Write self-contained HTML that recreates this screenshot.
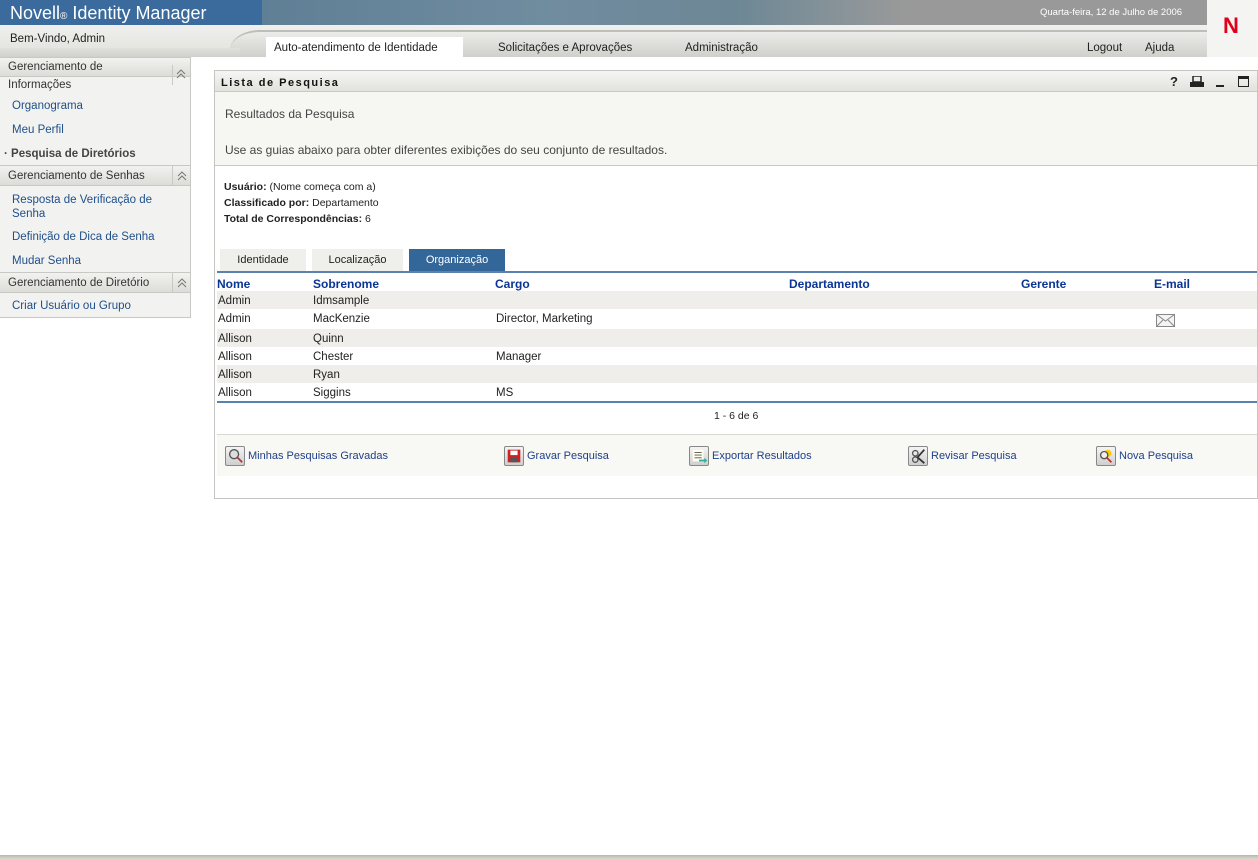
<!DOCTYPE html>
<html><head><meta charset="utf-8">
<style>
*{margin:0;padding:0;box-sizing:border-box}
body{width:1258px;height:859px;position:relative;background:#fff;font-family:"Liberation Sans",sans-serif;font-size:11px;color:#222;overflow:hidden}
.a{position:absolute;white-space:nowrap}
.t{margin-top:2px}
.lnk{color:#1f4f8a}
.sh{position:absolute;left:0;width:190px;background:linear-gradient(#f2f2f0,#dcdcd8);border-top:1px solid #c8c8c4;border-bottom:1px solid #c8c8c4;color:#333;font-size:11.5px;padding-left:8px}
.chev{position:absolute;right:0;top:0;width:18px;height:100%;border-left:1px solid #c8c8c4}
.row{position:absolute;left:217px;width:1040px;height:18px}
.row span{position:absolute;top:4px;font-size:11.5px}
.hd{position:absolute;top:277px;color:#0a3595;font-weight:bold;font-size:12px}
.act{position:absolute;top:446px;display:flex;align-items:center;gap:3px;color:#1f3f8a;font-size:11px}
.ic{width:20px;height:20px;border:1px solid #888;border-radius:2px;background:linear-gradient(#f4f4f4,#cfcfcf)}
</style></head><body>
<div class="a" style="left:0;top:0;width:262px;height:25px;background:#3b6a9c"></div>
<div class="a" style="left:262px;top:0;width:945px;height:25px;background:linear-gradient(90deg,#5f7f96 0%,#708c9f 30%,#6d8796 50%,#8a9499 62%,#999 68%,#999 100%)"></div>
<div class="a" style="left:10px;top:3px;color:#fff;font-size:18px">Novell<span style="font-size:10px">®</span> Identity Manager</div>
<div class="a" style="left:1040px;top:7px;color:#fff;font-size:9.5px">Quarta-feira, 12 de Julho de 2006</div>
<div class="a" style="left:1207px;top:0;width:51px;height:57px;background:#f4f4f2"></div>
<div class="a" style="left:1223px;top:13px;color:#e0001b;font-weight:bold;font-size:22px">N</div>
<div class="a" style="left:0;top:25px;width:1207px;height:32px;background:linear-gradient(#f0f0ee,#e0e0dc)"></div>
<div class="a" style="left:230px;top:30px;width:977px;height:27px;background:linear-gradient(#ececea,#cfcfcb);border-top-left-radius:30px 20px;border-top:2px solid #bdbdb9"></div>
<div class="a" style="left:0;top:48px;width:240px;height:9px;background:linear-gradient(#e0e0dc,#cfcfcb)"></div>
<div class="a t" style="left:10px;top:31px;font-size:11.5px;color:#222">Bem-Vindo, Admin</div>
<div class="a" style="left:266px;top:37px;width:197px;height:20px;background:#fff"></div>
<div class="a t" style="left:274px;top:40px;font-size:11.5px">Auto-atendimento de Identidade</div>
<div class="a t" style="left:498px;top:40px;font-size:11.5px">Solicitações e Aprovações</div>
<div class="a t" style="left:685px;top:40px;font-size:11.5px">Administração</div>
<div class="a t" style="left:1087px;top:40px;font-size:11.5px">Logout</div>
<div class="a t" style="left:1145px;top:40px;font-size:11.5px">Ajuda</div>
<div class="a" style="left:0;top:57px;width:191px;height:261px;background:#f2f2f0;border-right:1px solid #c8c8c4;border-bottom:1px solid #c8c8c4"></div>
<div class="sh" style="top:57px;height:20px;padding-top:3px">Gerenciamento de</div>
<div class="a" style="left:172px;top:65px;width:1px;height:20px;background:#c8c8c4"></div>
<svg class="a" style="left:176px;top:69px" width="10" height="10"><path d="M1 5L5 1L9 5M1 9L5 5L9 9" fill="none" stroke="#777"/></svg>
<div class="a t" style="left:8px;top:77px;font-size:11.5px;color:#333">Informações</div>
<div class="a lnk t" style="left:12px;top:98px;font-size:11.5px">Organograma</div>
<div class="a lnk t" style="left:12px;top:122px;font-size:11.5px">Meu Perfil</div>
<div class="a t" style="left:4px;top:146px;font-size:11.5px;font-weight:bold;color:#444">· Pesquisa de Diretórios</div>
<div class="sh" style="top:165px;height:21px;padding-top:4px">Gerenciamento de Senhas<div class="chev"><svg style="position:absolute;left:4px;top:5px" width="10" height="10"><path d="M1 5L5 1L9 5M1 9L5 5L9 9" fill="none" stroke="#777"/></svg></div></div>
<div class="a lnk t" style="left:12px;top:191px;font-size:11.5px;line-height:14px">Resposta de Verificação de<br>Senha</div>
<div class="a lnk t" style="left:12px;top:229px;font-size:11.5px">Definição de Dica de Senha</div>
<div class="a lnk t" style="left:12px;top:253px;font-size:11.5px">Mudar Senha</div>
<div class="sh" style="top:272px;height:21px;padding-top:4px">Gerenciamento de Diretório<div class="chev"><svg style="position:absolute;left:4px;top:5px" width="10" height="10"><path d="M1 5L5 1L9 5M1 9L5 5L9 9" fill="none" stroke="#777"/></svg></div></div>
<div class="a lnk t" style="left:12px;top:298px;font-size:11.5px">Criar Usuário ou Grupo</div>
<div class="a" style="left:214px;top:70px;width:1044px;height:429px;border:1px solid #c4c4c0;background:#fff"></div>
<div class="a" style="left:215px;top:71px;width:1042px;height:21px;background:linear-gradient(#f6f6f4,#e2e2de);border-bottom:1px solid #c8c8c4"></div>
<div class="a t" style="left:221px;top:75px;font-weight:bold;font-size:11px;letter-spacing:1.5px;color:#111">Lista de Pesquisa</div>
<div class="a" style="left:1170px;top:74px;font-weight:bold;font-size:13px;color:#222">?</div>
<svg class="a" style="left:1190px;top:76px" width="14" height="12"><rect x="3" y="0" width="8" height="6" fill="none" stroke="#222" stroke-width="1.5"/><rect x="0" y="6" width="14" height="5" fill="#222"/></svg>
<div class="a" style="left:1216px;top:85px;width:8px;height:2px;background:#222"></div>
<div class="a" style="left:1238px;top:76px;width:11px;height:11px;border:1.5px solid #222;border-top-width:3px"></div>
<div class="a" style="left:215px;top:92px;width:1042px;height:74px;background:#f6f7f3;border-bottom:1px solid #c8c8c4"></div>
<div class="a t" style="left:225px;top:105px;font-size:12px;color:#444">Resultados da Pesquisa</div>
<div class="a t" style="left:225px;top:141px;font-size:12px;color:#444">Use as guias abaixo para obter diferentes exibições do seu conjunto de resultados.</div>
<div class="a" style="left:224px;top:181px;font-size:10.5px"><b>Usuário:</b> (Nome começa com a)</div>
<div class="a" style="left:224px;top:197px;font-size:10.5px"><b>Classificado por:</b> Departamento</div>
<div class="a" style="left:224px;top:213px;font-size:10.5px"><b>Total de Correspondências:</b> 6</div>
<div class="a" style="left:220px;top:249px;width:86px;height:22px;background:#efefec;font-size:11px;text-align:center;padding-top:5px">Identidade</div>
<div class="a" style="left:312px;top:249px;width:91px;height:22px;background:#efefec;font-size:11px;text-align:center;padding-top:5px">Localização</div>
<div class="a" style="left:409px;top:249px;width:96px;height:22px;background:#336699;color:#fff;font-size:11px;text-align:center;padding-top:5px">Organização</div>
<div class="a" style="left:217px;top:271px;width:1040px;height:2px;background:#5b82ae"></div>
<div class="hd" style="left:217px">Nome</div>
<div class="hd" style="left:313px">Sobrenome</div>
<div class="hd" style="left:495px">Cargo</div>
<div class="hd" style="left:789px">Departamento</div>
<div class="hd" style="left:1021px">Gerente</div>
<div class="hd" style="left:1154px">E-mail</div>
<div class="row" style="top:291px;background:#efeeea"><span style="left:1px">Admin</span><span style="left:96px">Idmsample</span></div>
<div class="row" style="top:309px;height:20px"><span style="left:1px">Admin</span><span style="left:96px">MacKenzie</span><span style="left:279px">Director, Marketing</span></div>
<svg class="a" style="left:1156px;top:314px" width="19" height="13"><rect x="0.5" y="0.5" width="18" height="12" fill="#f4f4f4" stroke="#888"/><path d="M0.5 0.5L9.5 7L18.5 0.5M0.5 12.5L7 6M18.5 12.5L12 6" fill="none" stroke="#888"/></svg>
<div class="row" style="top:329px;background:#efeeea"><span style="left:1px">Allison</span><span style="left:96px">Quinn</span></div>
<div class="row" style="top:347px"><span style="left:1px">Allison</span><span style="left:96px">Chester</span><span style="left:279px">Manager</span></div>
<div class="row" style="top:365px;background:#efeeea"><span style="left:1px">Allison</span><span style="left:96px">Ryan</span></div>
<div class="row" style="top:383px"><span style="left:1px">Allison</span><span style="left:96px">Siggins</span><span style="left:279px">MS</span></div>
<div class="a" style="left:217px;top:401px;width:1040px;height:2px;background:#5b82ae"></div>
<div class="a" style="left:714px;top:410px;font-size:10.5px">1 - 6 de 6</div>
<div class="a" style="left:217px;top:434px;width:1040px;height:42px;background:#f8f8f5;border-top:1px solid #d8d8d4"></div>
<div class="act" style="left:225px"><svg class="ic" viewBox="0 0 20 20"><circle cx="9" cy="8" r="5" fill="#ddd" stroke="#555" stroke-width="1.5"/><path d="M12 11l6 6" stroke="#b33" stroke-width="2"/></svg>Minhas Pesquisas Gravadas</div>
<div class="act" style="left:504px"><svg class="ic" viewBox="0 0 20 20"><rect x="3" y="3" width="14" height="14" fill="#c22"/><rect x="6" y="4" width="8" height="5" fill="#fff"/><rect x="6" y="12" width="8" height="5" fill="#555"/></svg>Gravar Pesquisa</div>
<div class="act" style="left:689px"><svg class="ic" viewBox="0 0 20 20"><rect x="3" y="3" width="12" height="13" fill="#ffe"/><path d="M5 6h8M5 9h8M5 12h8" stroke="#555"/><path d="M10 14h6v-2l3 3-3 3v-2h-6z" fill="#3a9"/></svg>Exportar Resultados</div>
<div class="act" style="left:908px"><svg class="ic" viewBox="0 0 20 20"><circle cx="7" cy="7" r="3" fill="none" stroke="#555" stroke-width="1.5"/><circle cx="7" cy="14" r="3" fill="none" stroke="#555" stroke-width="1.5"/><path d="M9 11l8 7M17 3l-8 9" stroke="#333" stroke-width="2"/></svg>Revisar Pesquisa</div>
<div class="act" style="left:1096px"><svg class="ic" viewBox="0 0 20 20"><circle cx="12" cy="7" r="4" fill="#fc0"/><circle cx="8" cy="9" r="4" fill="#eee" stroke="#555" stroke-width="1.5"/><path d="M11 12l5 5" stroke="#b33" stroke-width="2"/></svg>Nova Pesquisa</div>
<div class="a" style="left:0;top:855px;width:1258px;height:4px;background:linear-gradient(#b8b8a8,#d8d8d0)"></div>
</body></html>
